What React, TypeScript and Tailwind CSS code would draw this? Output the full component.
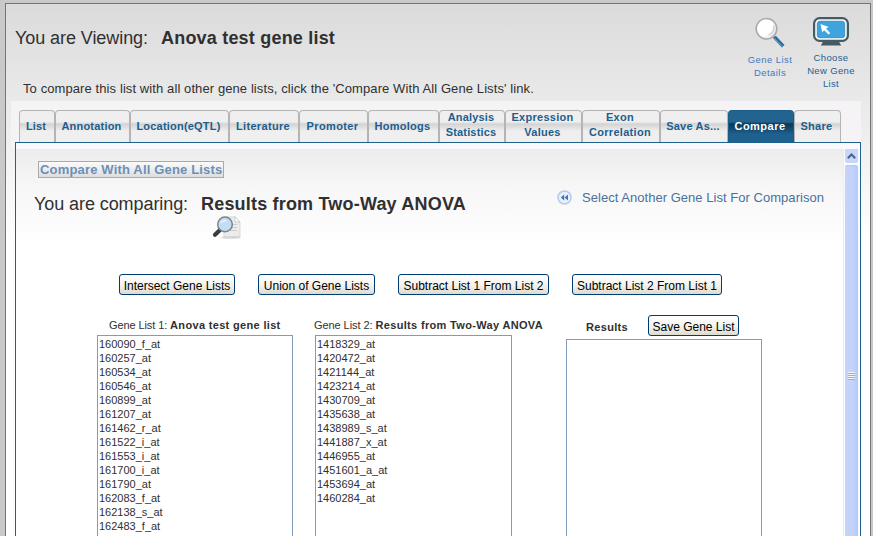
import type { ReactNode } from "react";

type Tab = { lines: string[]; box: string; active?: boolean };

const tabs: Tab[] = [
  { lines: ["List"], box: "w-[36px] tracking-[0.1px]" },
  { lines: ["Annotation"], box: "w-[75px] tracking-[0.2px]" },
  { lines: ["Location(eQTL)"], box: "w-[99px] tracking-[0.2px]" },
  { lines: ["Literature"], box: "w-[70px] tracking-[0.32px]" },
  { lines: ["Promoter"], box: "w-[69px] tracking-[0.38px]" },
  { lines: ["Homologs"], box: "w-[71px] tracking-[0.27px]" },
  { lines: ["Analysis", "Statistics"], box: "w-[66px] tracking-[0.15px]" },
  { lines: ["Expression", "Values"], box: "w-[77px] tracking-[0.27px]" },
  { lines: ["Exon", "Correlation"], box: "w-[78px] tracking-[0.3px]" },
  { lines: ["Save As..."], box: "w-[68px] tracking-[0.2px]" },
  { lines: ["Compare"], box: "w-[66px] tracking-[0.47px]", active: true },
  { lines: ["Share"], box: "w-[47px] tracking-[0.28px]" },
];

const listOne = [
  "160090_f_at", "160257_at", "160534_at", "160546_at", "160899_at", "161207_at", "161462_r_at",
  "161522_i_at", "161553_i_at", "161700_i_at", "161790_at", "162083_f_at", "162138_s_at", "162483_f_at",
];

const listTwo = [
  "1418329_at", "1420472_at", "1421144_at", "1423214_at", "1430709_at", "1435638_at",
  "1438989_s_at", "1441887_x_at", "1446955_at", "1451601_a_at", "1453694_at", "1460284_at",
];

function MagnifierIcon() {
  return (
    <svg width="30" height="31" viewBox="0 0 30 31" className="block">
      <defs>
        <radialGradient id="lens" cx="0.4" cy="0.4" r="0.65">
          <stop offset="0.65" stopColor="#fff" />
          <stop offset="1" stopColor="#dcdcdc" />
        </radialGradient>
      </defs>
      <path d="M17.5 18.5 20 21" stroke="#8a8a8a" strokeWidth="2" />
      <path d="M19.500 20 28.200 29.200" stroke="#2b6f9f" strokeWidth="3.600" />
      <path d="M19.300 21.200 27.200 29.600" stroke="#6fa9d0" strokeWidth="1" />
      <circle cx="11.500" cy="11.800" r="10.300" fill="url(#lens)" stroke="#a9a9a9" strokeWidth="1.500" />
      <path d="M18.500 8.500c1.200 4-.8 8.400-5 9.500" fill="none" stroke="#d2d2d2" strokeWidth="1.600" />
    </svg>
  );
}

function MonitorIcon() {
  return (
    <svg width="36" height="30" viewBox="0 0 36 30" className="block">
      <path d="M11 23h14l3.200 5.500H7.800z" fill="#465a62" />
      <rect x="1.100" y="1.100" width="33.800" height="22.800" rx="5.500" fill="#f6fafb" stroke="#465a62" strokeWidth="2.200" />
      <rect x="4.300" y="4.300" width="27.400" height="16.400" rx="2.500" fill="#3fa4de" stroke="#2f7fb2" strokeWidth="0.700" />
      <path d="M7.500 7l1.700 8.200 2-2 4.300 4.300 1.700-1.500-4.200-4.400 2.700-1.600z" fill="#fff" />
    </svg>
  );
}

function DocumentSearchIcon() {
  return (
    <svg width="30" height="25" viewBox="0 0 30 25" className="block">
      <ellipse cx="19" cy="22.500" rx="10" ry="1.300" fill="#d6d6d6" />
      <path d="M11 2h12l5 5v14.500H12z" fill="#ececec" stroke="#d2d2d2" strokeWidth="0.800" />
      <path d="M23 1.500v5.500h5z" fill="#fff" stroke="#c4c4c4" strokeWidth="0.800" />
      <path d="M20 9.500h5M20 12.500h5M18 15.500h7" stroke="#c8c8c8" strokeWidth="0.900" />
      <path d="M3 19.800 8 15" stroke="#3c3c3e" strokeWidth="4.200" strokeLinecap="round" />
      <circle cx="13" cy="9.400" r="7.300" fill="#c2def5" stroke="#7f8389" strokeWidth="1.500" />
      <path d="M8.500 8.500c.7-3.300 4.600-4.600 7-2.500-2.500.2-4.500 1.200-7 2.500z" fill="#eaf5fd" />
    </svg>
  );
}

function RewindIcon() {
  return (
    <svg width="15" height="15" viewBox="0 0 15 15" className="block">
      <circle cx="7.500" cy="7.500" r="6.500" fill="#e9f0fa" stroke="#b3cbeb" strokeWidth="1.500" />
      <path d="M7.200 4.500v6L3.800 7.500zM11 4.500v6L7.600 7.500z" fill="#3f74b8" />
    </svg>
  );
}

function XpButton({ children, className }: { children: ReactNode; className: string }) {
  return (
    <button
      className={`block h-[21px] shrink-0 whitespace-nowrap rounded-[3px] border border-[#003c74] bg-linear-to-b from-white via-[#f5f4ef] to-[#dedbd0] pt-[3px] text-center text-[12px] leading-[16px] text-black ${className}`}
    >
      {children}
    </button>
  );
}

function TabButton({ tab }: { tab: Tab }) {
  const look = tab.active
    ? "border-[#1c5c89] bg-linear-to-b from-[#22648f] from-35% via-[#08385a] via-42% to-[#1f618e] to-75% text-white"
    : "border-[#b4b4b4] bg-linear-to-b from-[#efefef] from-35% via-[#d3d3d3] via-42% to-[#efefef] to-65% text-[#1d5e8c]";
  const lift = tab.lines.length > 1 ? "pb-[4px]" : "";
  return (
    <div
      className={`flex h-8 shrink-0 flex-col justify-center whitespace-nowrap rounded-t-[4px] border border-b-0 pr-[2px] text-center text-[11px] leading-[15px] font-bold ${look} ${lift} ${tab.box}`}
    >
      {tab.lines.map((line) => (
        <span key={line}>{line}</span>
      ))}
    </div>
  );
}

function GeneBox({ genes, className }: { genes: string[]; className: string }) {
  return (
    <div className={`h-[220px] border border-[#7f9db9] bg-white pt-px pl-px text-[11px] leading-[14px] text-[#303030] ${className}`}>
      {genes.map((gene) => (
        <div key={gene}>{gene}</div>
      ))}
    </div>
  );
}

function ScrollBar() {
  return (
    <div className="mt-[6px] flex w-[17px] shrink-0 flex-col border-l border-[#eeede5] bg-[#fbfbfd] pl-px">
      <div className="flex h-[14px] w-[13px] items-center justify-center rounded-b-[2px] bg-[#c8d6fb]">
        <svg width="9" height="6" viewBox="0 0 9 6">
          <path d="M.8 5.200 4.500 1.500 8.200 5.200" fill="none" stroke="#4d6185" strokeWidth="2" />
        </svg>
      </div>
      <div className="mt-[2px] h-[375px] w-[13px] rounded-t-[2px] border-t border-[#b4c8f6] bg-linear-to-r from-[#c5d3fb] from-55% to-[#b4cafa] pt-[206px]">
        <div className="mx-auto flex w-[7px] flex-col gap-px">
          {[0, 1, 2, 3].map((n) => (
            <div key={n} className="h-px bg-[#eef4fe] shadow-[0_1px_0_#8cb0f8]" />
          ))}
        </div>
      </div>
    </div>
  );
}

export default function App() {
  return (
    <div className="h-[536px] w-[873px] overflow-hidden bg-[#c9c9c9] pt-[3px] pl-[5px] font-['Liberation_Sans',Arial,sans-serif] text-[#303030]">
      <div className="h-[533px] w-[866px] border border-b-0 border-[#757575] bg-linear-to-b from-[#dbdbdb] via-[#f3f3f3] via-[160px] to-white to-[240px]">
        <header className="flex h-[97px] justify-between">
          <div className="pt-[23px] pl-[9px] whitespace-nowrap">
            <h1 className="flex h-[22px] text-[18px] leading-[22px]">
              <span className="w-[146px] tracking-[-0.07px]">You are Viewing:</span>
              <span className="font-bold tracking-[0.2px]">Anova test gene list</span>
            </h1>
            <p className="mt-[31px] ml-2 text-[13px] leading-[18px] tracking-[0.095px]">
              To compare this list with all other gene lists, click the 'Compare With All Gene Lists' link.
            </p>
          </div>
          <div className="flex pr-[7px] text-center text-[9.5px] leading-[13px] whitespace-nowrap">
            <a className="flex w-[58px] flex-col items-center pt-[13px] tracking-[0.45px] text-[#4479bd]">
              <MagnifierIcon />
              <span className="mt-[5px]">Gene List</span>
              <span>Details</span>
            </a>
            <a className="flex w-[64px] flex-col items-center pt-[13px] tracking-[0.35px] text-[#225f92]">
              <MonitorIcon />
              <span className="mt-[4px]">Choose</span>
              <span>New Gene</span>
              <span>List</span>
            </a>
          </div>
        </header>

        <nav className="-mb-[6px] ml-[5px] flex h-[47px] w-[850px] bg-[#f5f3f6] pt-[9px] pl-[8px]">
          {tabs.map((tab) => (
            <TabButton key={tab.lines[0]} tab={tab} />
          ))}
        </nav>

        <main className="relative ml-[9px] flex h-[394px] w-[846px] overflow-hidden border border-b-0 border-[#1d628f] bg-[#fafafe]">
          <div className="mt-[6px] flex w-[827px] shrink-0 flex-col bg-linear-to-b from-[#ececec] via-[#f6f6f6] via-[35px] to-white to-[96px]">
            <a className="mt-[12px] ml-[22px] h-[17px] w-[186px] border border-[#a9a9a9] bg-linear-to-b from-[#fbfbfb] to-[#dedede] pl-px text-[13px] leading-[15px] font-bold tracking-[0.17px] whitespace-nowrap text-[#6b90b8]">
              Compare With All Gene Lists
            </a>
            <div className="flex h-[62px] justify-between pr-[19px] pl-[18px] whitespace-nowrap">
              <div className="pt-[15px]">
                <h2 className="flex h-[22px] text-[18px] leading-[22px]">
                  <span className="w-[167px] tracking-[-0.08px]">You are comparing:</span>
                  <span className="font-bold tracking-[0.19px]">Results from Two-Way ANOVA</span>
                </h2>
                <div className="ml-[178px]">
                  <DocumentSearchIcon />
                </div>
              </div>
              <a className="flex h-[18px] pt-[12px] text-[13px] leading-[16px] tracking-[0.035px] text-[#4871a0]">
                <span className="mr-[10px]">
                  <RewindIcon />
                </span>
                Select Another Gene List For Comparison
              </a>
            </div>

            <div className="mt-[34px] flex gap-[23px] pl-[103px]">
              <XpButton className="w-[116px]">Intersect Gene Lists</XpButton>
              <XpButton className="w-[117px]">Union of Gene Lists</XpButton>
              <XpButton className="w-[151px]">Subtract List 1 From List 2</XpButton>
              <XpButton className="w-[150px]">Subtract List 2 From List 1</XpButton>
            </div>

            <div className="mt-[20px] flex pl-[81px] text-[11px] whitespace-nowrap">
              <section className="w-[196px]">
                <div className="h-[20px] pt-[3px] pl-[12px] leading-[14px]">
                  <span className="tracking-[-0.1px]">Gene List 1: </span>
                  <b className="tracking-[0.33px]">Anova test gene list</b>
                </div>
                <GeneBox genes={listOne} className="w-[196px]" />
              </section>
              <section className="ml-[22px] w-[197px]">
                <div className="-ml-px h-[20px] pt-[3px] leading-[14px]">
                  <span className="tracking-[-0.07px]">Gene List 2: </span>
                  <b className="tracking-[0.33px]">Results from Two-Way ANOVA</b>
                </div>
                <GeneBox genes={listTwo} className="w-[197px]" />
              </section>
              <section className="ml-[54px] w-[196px]">
                <div className="flex h-[24px] pl-[20px]">
                  <b className="w-[62px] pt-[5px] leading-[14px] tracking-[0.32px]">Results</b>
                  <XpButton className="w-[91px]">Save Gene List</XpButton>
                </div>
                <GeneBox genes={[]} className="w-[196px]" />
              </section>
            </div>
          </div>
          <ScrollBar />
        </main>
      </div>
    </div>
  );
}
